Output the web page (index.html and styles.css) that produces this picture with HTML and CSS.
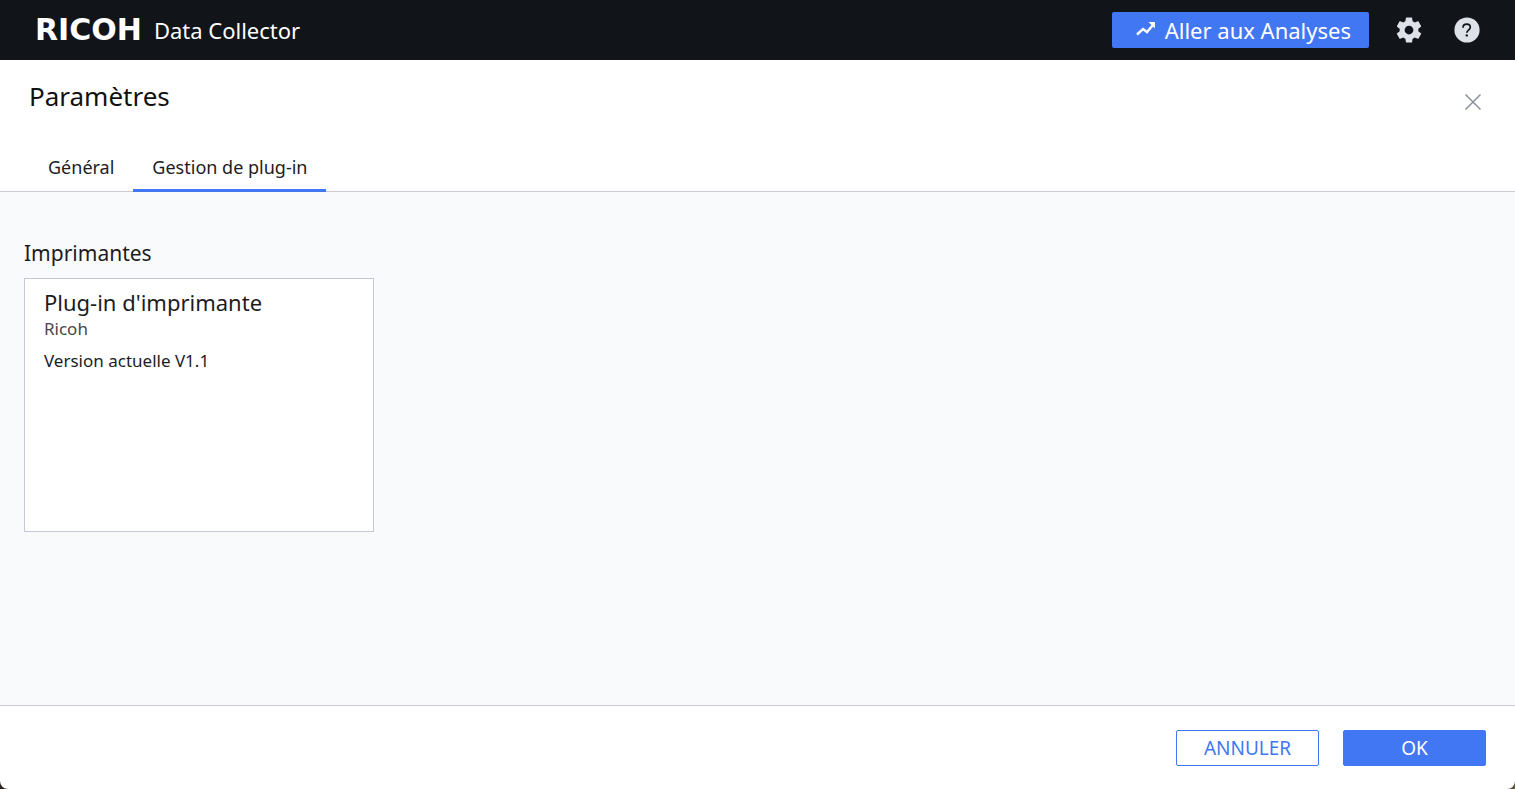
FILE: index.html
```html
<!DOCTYPE html>
<html lang="fr">
<head>
    <meta charset="UTF-8">
    <meta name="viewport" content="width=device-width, initial-scale=1.0">
    <title>RICOH Data Collector</title>
    <link rel="stylesheet" href="styles.css">
</head>
<body>
<div class="app">

    <!-- Barre supérieure -->
    <header class="topbar">
        <span class="logo">RICOH</span>
        <span class="product">Data Collector</span>
        <div class="topbar-actions">
            <button class="analytics-button" type="button">
                <svg width="20" height="18" viewBox="0 0 20 18" aria-hidden="true">
                    <path d="M1 13.500l6-5.500 4 3L16.500 4.500" fill="none" stroke="currentColor" stroke-width="2.400"/>
                    <path d="M12.500 1H19v6.500z" fill="currentColor"/>
                </svg>
                Aller aux Analyses
            </button>
            <button class="icon-button" type="button" aria-label="Paramètres">
                <svg width="30" height="30" viewBox="0 0 24 24" aria-hidden="true">
                    <path fill="currentColor" d="M19.430 12.980c.04-.32.07-.64.07-.98s-.03-.66-.07-.98l2.110-1.650c.19-.15.24-.42.12-.64l-2-3.460c-.12-.22-.39-.3-.61-.22l-2.490 1c-.52-.4-1.080-.73-1.690-.98l-.38-2.650C14.460 2.180 14.250 2 14 2h-4c-.25 0-.46.18-.49.42l-.38 2.650c-.61.25-1.170.59-1.690.98l-2.490-1c-.23-.09-.49 0-.61.22l-2 3.460c-.13.22-.07.49.12.64l2.110 1.650c-.04.32-.07.65-.07.98s.03.66.07.98l-2.110 1.650c-.19.15-.24.42-.12.64l2 3.460c.12.22.39.3.61.22l2.490-1c.52.4 1.080.73 1.690.98l.38 2.650c.03.24.24.42.49.42h4c.25 0 .46-.18.49-.42l.38-2.650c.61-.25 1.170-.59 1.690-.98l2.490 1c.23.09.49 0 .61-.22l2-3.460c.12-.22.07-.49-.12-.64zM12 15.500a3.500 3.500 0 1 1 0-7 3.500 3.500 0 0 1 0 7z"/>
                </svg>
            </button>
            <button class="icon-button" type="button" aria-label="Aide">
                <svg width="30" height="30" viewBox="0 0 30 30" aria-hidden="true">
                    <circle cx="15" cy="15" r="12.600" fill="currentColor"/>
                    <path d="M11 12.700c0-2.400 1.500-3.600 3.700-3.600s3.600 1.200 3.600 3.100c0 2.700-3.500 3-3.500 5.600" fill="none" stroke="#111419" stroke-width="1.700"/>
                    <circle cx="14.800" cy="20.400" r="1.200" fill="#111419"/>
                </svg>
            </button>
        </div>
    </header>

    <!-- Titre et onglets -->
    <div class="page-head">
        <h1>Paramètres</h1>
        <button class="close-button" type="button" aria-label="Fermer">
            <svg width="16" height="16" viewBox="0 0 16 16" aria-hidden="true">
                <path d="M.5.5l15 15M15.500.5l-15 15" fill="none" stroke="currentColor" stroke-width="1.500"/>
            </svg>
        </button>
    </div>
    <nav class="tabs">
        <a class="tab" href="#general">Général</a>
        <a class="tab active" href="#plugins" aria-current="page">Gestion de plug-in</a>
    </nav>

    <main class="content" id="plugins">
        <h2>Imprimantes</h2>
        <div class="cards">
            <article class="card">
                <h3>Plug-in d'imprimante</h3>
                <p class="vendor">Ricoh</p>
                <p class="version">Version actuelle V1.1</p>
            </article>
        </div>
    </main>

    <footer class="footer">
        <button class="btn" type="button">ANNULER</button>
        <button class="btn btn-primary" type="button">OK</button>
    </footer>

</div>
</body>
</html>
```
FILE: styles.css
```css
* {
    box-sizing: border-box;
}

body {
    margin: 0;
    background: linear-gradient(90deg, #2c241e, #5c563f);
    font-family: "Noto Sans", "Open Sans", sans-serif;
    color: #1c1c1f;
}

h1, h2, h3, p {
    margin: 0;
    font-weight: 400;
}

button {
    font-family: inherit;
    cursor: pointer;
}

.app {
    display: flex;
    flex-direction: column;
    min-height: 100vh;
    background: #fff;
    border-radius: 0 0 8px 8px;
    overflow: hidden;
}

/* Barre supérieure */
.topbar {
    display: flex;
    align-items: center;
    height: 60px;
    padding: 0 33px 0 35px;
    background: #111419;
    color: #fff;
}

.logo {
    font-family: "DejaVu Sans", sans-serif;
    font-size: 30px;
    font-weight: 700;
    line-height: 32px;
}

.product {
    margin-left: 12px;
    font-size: 22px;
}

.topbar-actions {
    display: flex;
    align-items: center;
    gap: 28px;
    margin-left: auto;
}

.analytics-button {
    display: flex;
    align-items: center;
    justify-content: space-between;
    width: 257px;
    height: 36px;
    padding: 0 18px 0 24px;
    border: none;
    border-radius: 2px;
    background: #4277f4;
    color: #fff;
    font-size: 22px;
}

.icon-button {
    display: flex;
    padding: 0;
    border: none;
    background: none;
    color: #dde1e8;
}

.analytics-button + .icon-button {
    margin-left: -3px;
}

/* Titre */
.page-head {
    display: flex;
    align-items: flex-start;
    justify-content: space-between;
    height: 82px;
    padding: 18px 34px 0 29px;
}

h1 {
    font-size: 26px;
    line-height: 36px;
    color: #111;
}

.close-button {
    display: flex;
    margin-top: 16px;
    padding: 0;
    border: none;
    background: none;
    color: #8c909c;
}

/* Onglets */
.tabs {
    display: flex;
    height: 50px;
    padding-left: 29px;
    border-bottom: 1px solid #c9ccd3;
}

.tab {
    height: 50px;
    padding: 0 19px;
    border-bottom: 3px solid transparent;
    font-size: 18px;
    line-height: 50px;
    color: #1c1c1f;
    text-decoration: none;
}

.tab.active {
    border-bottom-color: #4277f4;
}

/* Contenu */
.content {
    flex: 1;
    padding: 44px 24px;
    background: #f9fafc;
}

h2 {
    margin-bottom: 8px;
    font-size: 21px;
    line-height: 34px;
}

.cards {
    display: flex;
    flex-wrap: wrap;
    gap: 24px;
}

.card {
    width: 350px;
    min-height: 254px;
    padding: 8px 19px;
    border: 1px solid #c5c8d4;
    background: #fff;
}

h3 {
    font-size: 22px;
    line-height: 30px;
}

.vendor {
    font-size: 17px;
    line-height: 24px;
    color: #47474a;
}

.version {
    margin-top: 8px;
    font-size: 17px;
    line-height: 24px;
}

/* Pied de page */
.footer {
    display: flex;
    justify-content: flex-end;
    gap: 24px;
    padding: 24px 29px 23px;
    border-top: 1px solid #c9ccd3;
}

.btn {
    width: 143px;
    height: 36px;
    padding: 0;
    border: 1px solid #4277f4;
    border-radius: 2px;
    background: #fff;
    color: #4277f4;
    font-size: 19px;
}

.btn-primary {
    background: #4277f4;
    color: #fff;
}
```
